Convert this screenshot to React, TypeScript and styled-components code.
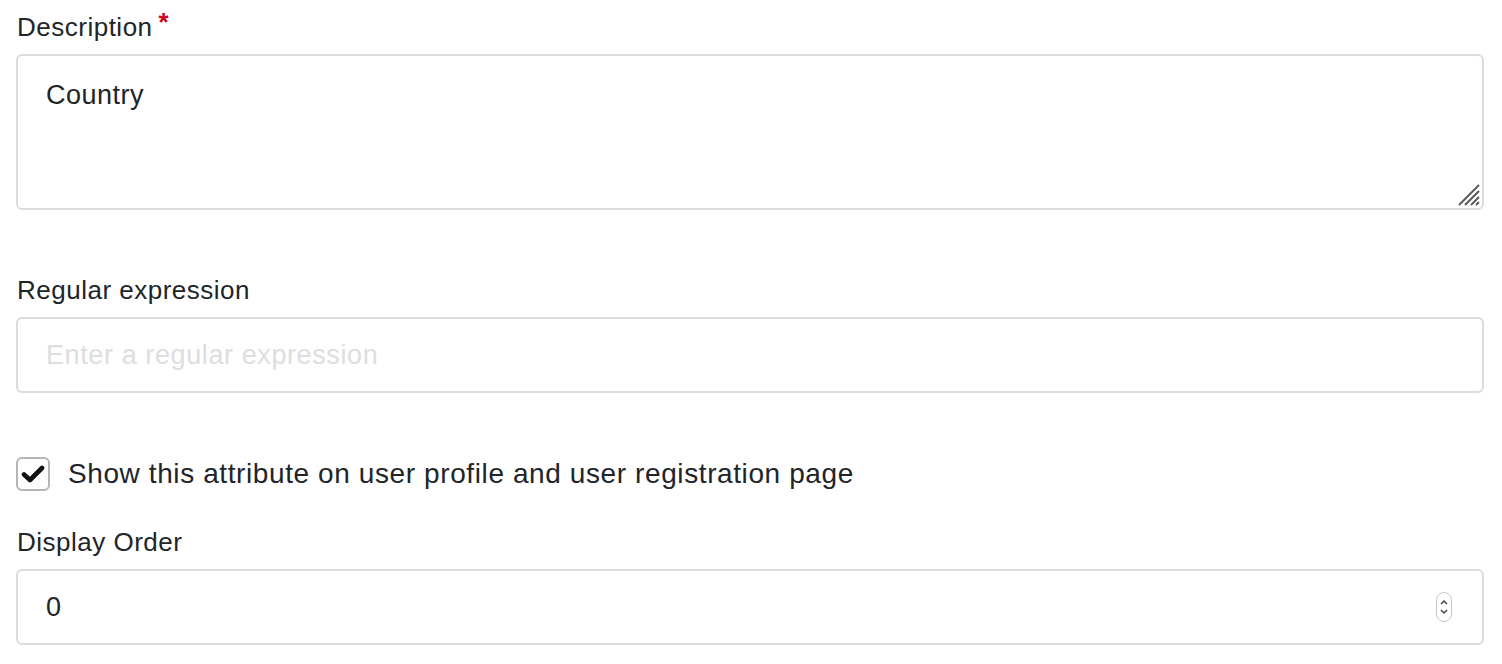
import React from 'react';
import styled, { createGlobalStyle } from "styled-components";

const GlobalStyle = createGlobalStyle`
  html, body {
    margin: 0;
    padding: 0;
    background: #fff;
  }
  body {
    font-family: "Liberation Sans", Arial, sans-serif;
    color: #212529;
  }
`;

const App = () => {
  return (
    <Form>
      <GlobalStyle/>
      <Field>
        <Label>
          Description<Required>*</Required>
        </Label>
        <TextAreaWrap>
          <TextArea defaultValue={"Country"}/>
          <ResizeGrip width="26" height="26" viewBox="0 0 26 26">
            <path d="M24 4 L4 24 M24 10 L10 24 M24 16 L16 24 M24 21 L21 24" stroke="#555" strokeWidth="1.8" fill="none"/>
          </ResizeGrip>
        </TextAreaWrap>
      </Field>

      <Field spaced>
        <Label>Regular expression</Label>
        <InputBox>
          <Input placeholder="Enter a regular expression"/>
        </InputBox>
      </Field>

      <CheckRow>
        <CheckBox>
          <svg width="24" height="20" viewBox="0 0 24 20">
            <path d="M3 10.5 L9 16 L21 4" stroke="#111" strokeWidth="4.6" fill="none" strokeLinecap="round" strokeLinejoin="round"/>
          </svg>
        </CheckBox>
        <CheckLabel>Show this attribute on user profile and user registration page</CheckLabel>
      </CheckRow>

      <Field>
        <Label>Display Order</Label>
        <InputBox>
          <Input defaultValue={"0"}/>
          <Spinner>
            <svg width="14" height="26" viewBox="0 0 14 26">
              <path d="M4 10 L7 7 L10 10" stroke="#444" strokeWidth="1.5" fill="none"/>
              <path d="M4 16 L7 19 L10 16" stroke="#444" strokeWidth="1.5" fill="none"/>
            </svg>
          </Spinner>
        </InputBox>
      </Field>
    </Form>
  );
};

export default App;

const Form = styled.div`
  padding: 8px 18px 0 16px;
  width: 1502px;
  box-sizing: border-box;
`;

const Field = styled.div<{ spaced?: boolean }>`
  display: flex;
  flex-direction: column;
  margin-top: ${p => p.spaced ? "61px" : "30px"};

  &:first-child {
    margin-top: 0;
  }
`;

const Label = styled.label`
  font-size: 26px;
  line-height: 38px;
  letter-spacing: 0.5px;
  margin-bottom: 8px;
  padding-left: 1px;
  color: #212529;
`;

const Required = styled.span`
  color: #d0021b;
  font-size: 26px;
  font-weight: bold;
  vertical-align: top;
  position: relative;
  top: -5px;
  margin-left: 6px;
`;

const TextAreaWrap = styled.div`
  position: relative;
  display: flex;
`;

const TextArea = styled.textarea`
  flex: 1;
  height: 156px;
  box-sizing: border-box;
  border: 2px solid #dcdcdc;
  border-radius: 6px;
  padding: 20px 28px;
  font-family: "Liberation Sans", Arial, sans-serif;
  font-size: 27px;
  line-height: 38px;
  letter-spacing: 0.5px;
  color: #212529;
  resize: none;
  outline: none;
`;

const ResizeGrip = styled.svg`
  position: absolute;
  right: 3px;
  bottom: 3px;
`;

const InputBox = styled.div`
  display: flex;
  align-items: center;
  height: 76px;
  flex-shrink: 0;
  box-sizing: border-box;
  border: 2px solid #dcdcdc;
  border-radius: 6px;
  padding: 0 30px 0 28px;
`;

const Input = styled.input`
  flex: 1;
  border: 0;
  outline: none;
  padding: 0;
  font-family: "Liberation Sans", Arial, sans-serif;
  font-size: 27px;
  line-height: 38px;
  letter-spacing: 0.6px;
  color: #212529;
  background: transparent;

  &::placeholder {
    color: #dedede;
  }
`;

const Spinner = styled.span`
  display: flex;
  align-items: center;
  justify-content: center;
  width: 14px;
  height: 28px;
  border: 1px solid #c8c8c8;
  border-radius: 8px;
`;

const CheckRow = styled.div`
  display: flex;
  align-items: center;
  gap: 18px;
  height: 38px;
  margin-top: 62px;
`;

const CheckBox = styled.span`
  display: flex;
  align-items: center;
  justify-content: center;
  width: 34px;
  height: 34px;
  box-sizing: border-box;
  border: 2px solid #b5b5b5;
  border-radius: 6px;
  background: #fff;
`;

const CheckLabel = styled.span`
  font-size: 28px;
  line-height: 38px;
  letter-spacing: 0.6px;
  color: #212529;
`;
